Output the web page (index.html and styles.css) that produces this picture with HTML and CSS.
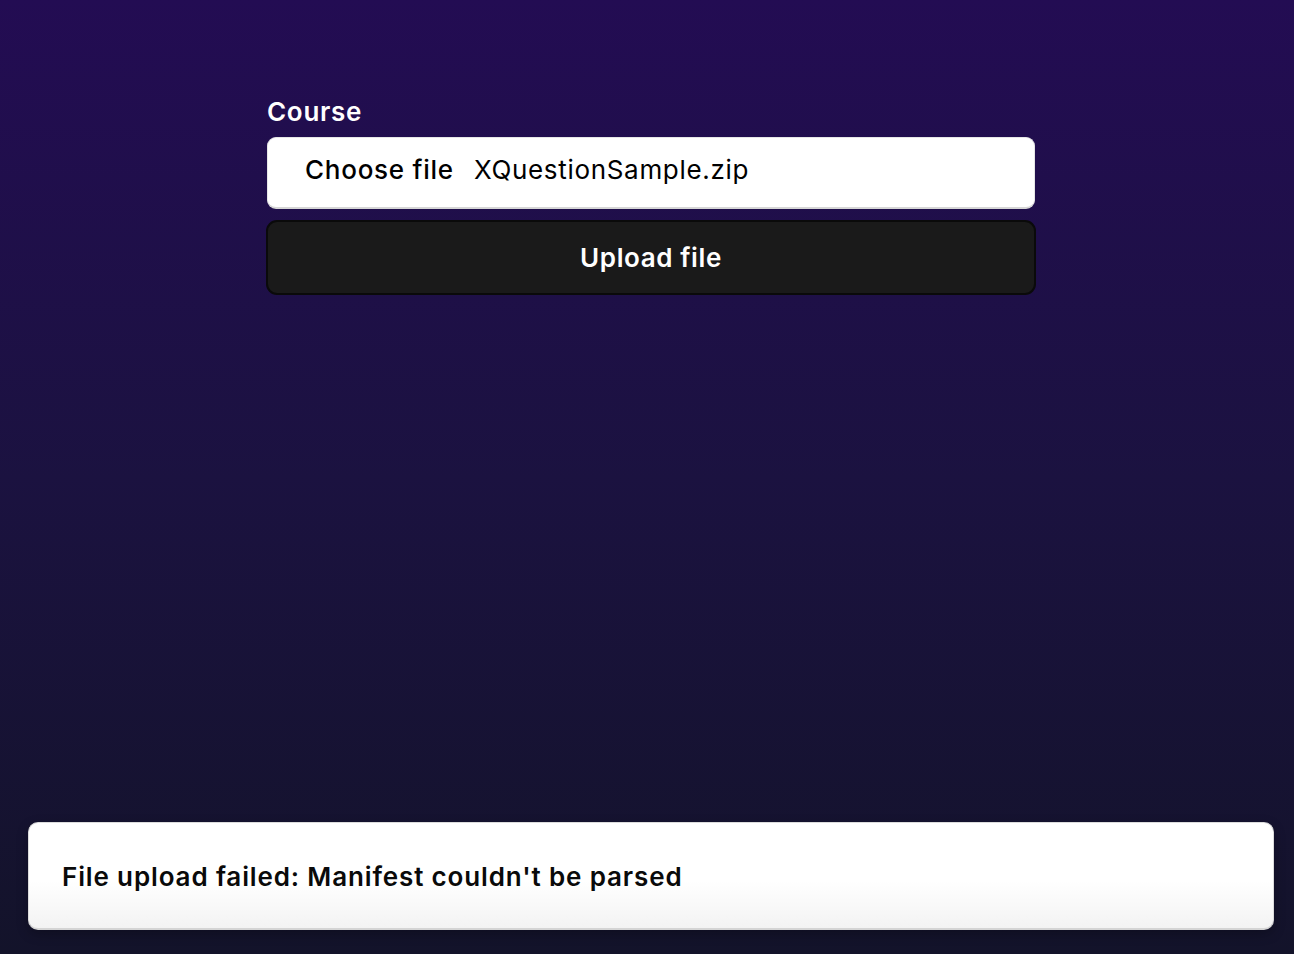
FILE: index.html
```html
<!DOCTYPE html>
<html lang="en">
<head>
<meta charset="utf-8">
<title>Upload course</title>
<link rel="stylesheet" href="styles.css">
</head>
<body>
<main class="page">
  <form class="upload-form">
    <label class="field-label" for="course">Course</label>
    <div class="file-input" id="course">
      <span class="file-button">Choose file</span>
      <span class="file-name">XQuestionSample.zip</span>
    </div>
    <button type="button" class="upload-button">Upload file</button>
  </form>
  <div class="toast">File upload failed: Manifest couldn't be parsed</div>
</main>
</body>
</html>
```

FILE: styles.css
```css
html, body {
  margin: 0;
  padding: 0;
  height: 100%;
}
body {
  font-family: Inter, "Noto Sans", Roboto, sans-serif;
  background: linear-gradient(to bottom, #230c53 0%, #1b1240 50%, #13132a 100%);
  color: #fff;
  overflow: hidden;
}
.page {
  height: 100%;
  display: flex;
  flex-direction: column;
  justify-content: space-between;
  box-sizing: border-box;
  padding: 95px 20px 24px 28px;
}
.upload-form {
  width: 770px;
  margin-left: 238px;
  display: flex;
  flex-direction: column;
}
.field-label {
  font-size: 26px;
  font-weight: 600;
  line-height: 32px;
  margin-left: 1px;
  padding-top: 1px;
  margin-bottom: 9px;
  letter-spacing: 0.7px;
}
.file-input {
  box-sizing: border-box;
  height: 72px;
  margin: 0 1px;
  background: #fff;
  border: 1px solid #e6e6e6;
  border-bottom: 2px solid #d6d6d6;
  border-radius: 9px;
  color: #000;
  font-size: 26px;
  letter-spacing: 0.7px;
  display: flex;
  align-items: flex-start;
  padding-top: 16px;
  padding-left: 37px;
  gap: 20px;
}
.file-button {
  font-weight: 500;
  letter-spacing: 0.75px;
}
.file-name {
  font-weight: 400;
  letter-spacing: 0.68px;
}
.upload-button {
  margin-top: 11px;
  height: 75px;
  background: #1a1a1a;
  border: 2px solid #0a0a0a;
  border-radius: 11px;
  color: #fff;
  font-family: inherit;
  font-size: 26px;
  letter-spacing: 0.6px;
  font-weight: 600;
  padding: 0;
}
.toast {
  box-sizing: border-box;
  width: 1246px;
  height: 108px;
  background: linear-gradient(to bottom, #ffffff 55%, #f3f3f3 100%);
  border: 1px solid #dcdcdc;
  border-bottom: 2px solid #d4d4d4;
  border-radius: 10px;
  color: #0a0a0a;
  font-size: 26px;
  letter-spacing: 0.86px;
  font-weight: 600;
  display: flex;
  align-items: center;
  padding-left: 33px;
  padding-top: 1px;
  box-shadow: 0 4px 12px rgba(0,0,0,0.25);
}
```
